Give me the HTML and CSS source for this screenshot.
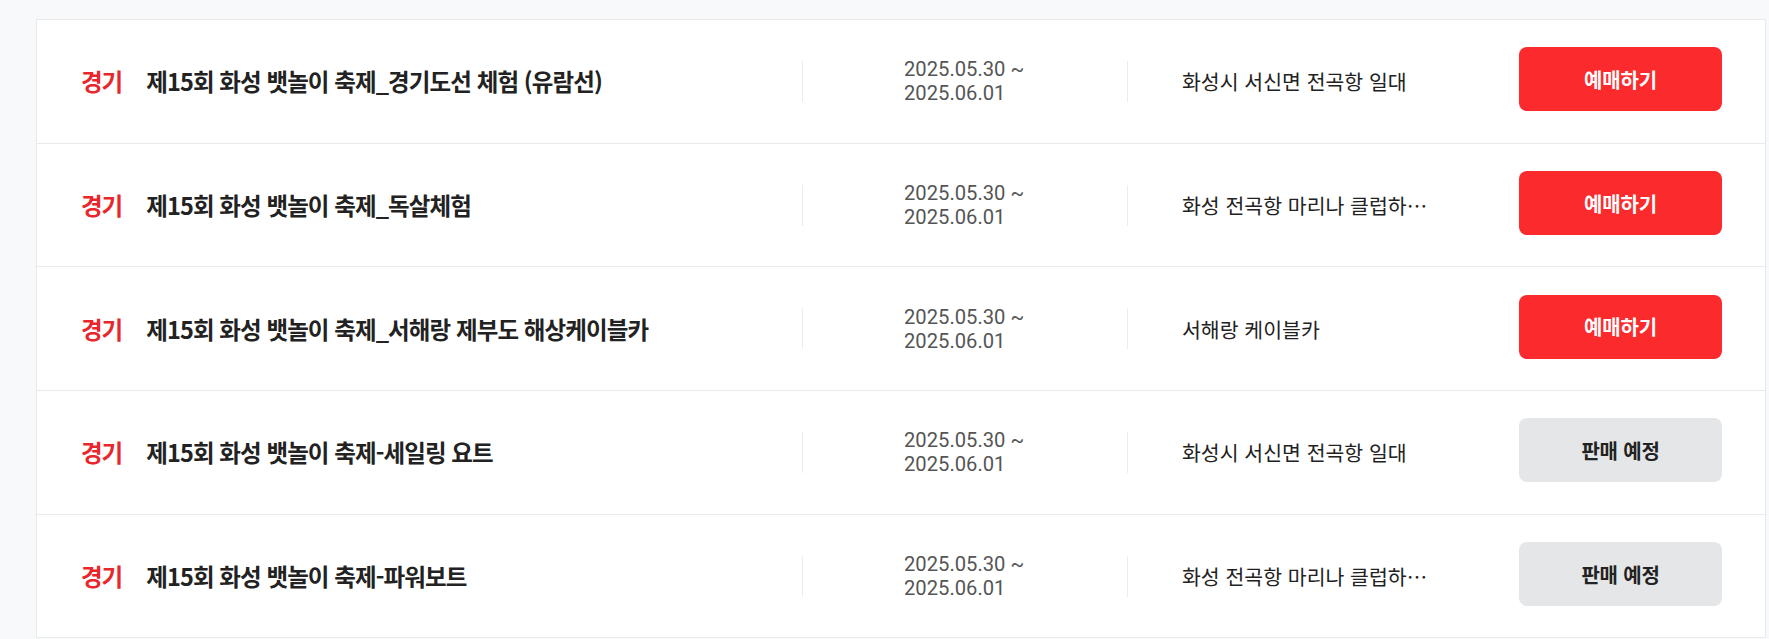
FILE: index.html
```html
<!DOCTYPE html>
<html lang="ko">
<head>
<meta charset="utf-8">
<title>공연 목록</title>
<link rel="stylesheet" href="styles.css">
</head>
<body>
<div class="list">
  <div class="row">
    <div class="col-title"><span class="region">경기</span><span class="title">제15회 화성 뱃놀이 축제_경기도선 체험 (유람선)</span></div>
    <div class="col-date"><span class="date">2025.05.30 ~ 2025.06.01</span></div>
    <div class="col-loc"><span class="loc">화성시 서신면 전곡항 일대</span></div>
    <div class="col-btn"><button class="btn btn-buy">예매하기</button></div>
  </div>
  <div class="row">
    <div class="col-title"><span class="region">경기</span><span class="title">제15회 화성 뱃놀이 축제_독살체험</span></div>
    <div class="col-date"><span class="date">2025.05.30 ~ 2025.06.01</span></div>
    <div class="col-loc"><span class="loc">화성 전곡항 마리나 클럽하우스</span></div>
    <div class="col-btn"><button class="btn btn-buy">예매하기</button></div>
  </div>
  <div class="row">
    <div class="col-title"><span class="region">경기</span><span class="title">제15회 화성 뱃놀이 축제_서해랑 제부도 해상케이블카</span></div>
    <div class="col-date"><span class="date">2025.05.30 ~ 2025.06.01</span></div>
    <div class="col-loc"><span class="loc">서해랑 케이블카</span></div>
    <div class="col-btn"><button class="btn btn-buy">예매하기</button></div>
  </div>
  <div class="row">
    <div class="col-title"><span class="region">경기</span><span class="title">제15회 화성 뱃놀이 축제-세일링 요트</span></div>
    <div class="col-date"><span class="date">2025.05.30 ~ 2025.06.01</span></div>
    <div class="col-loc"><span class="loc">화성시 서신면 전곡항 일대</span></div>
    <div class="col-btn"><button class="btn btn-soon">판매 예정</button></div>
  </div>
  <div class="row">
    <div class="col-title"><span class="region">경기</span><span class="title">제15회 화성 뱃놀이 축제-파워보트</span></div>
    <div class="col-date"><span class="date">2025.05.30 ~ 2025.06.01</span></div>
    <div class="col-loc"><span class="loc">화성 전곡항 마리나 클럽하우스</span></div>
    <div class="col-btn"><button class="btn btn-soon">판매 예정</button></div>
  </div>
</div>
</body>
</html>
```

FILE: styles.css
```css
html, body {
  margin: 0;
  padding: 0;
  background: #f8f9fa;
}

body {
  font-family: "Noto Sans CJK KR", "Noto Sans", sans-serif;
  color: #222;
  overflow: hidden;
}

.list {
  margin: 19px 3px 0 36px;
  background: #fff;
  border: 1px solid #e9eaec;
  border-bottom: none;
}

.row {
  display: flex;
  align-items: center;
  height: 122.7px;
  border-bottom: 1px solid #e9eaec;
}

.col-title {
  flex: 1;
  min-width: 0;
  display: flex;
  align-items: center;
  padding-left: 44px;
  white-space: nowrap;
}

.region {
  color: #e8262c;
  font-weight: 700;
  font-size: 23.5px;
  letter-spacing: -1px;
  margin-right: 24px;
}

.title {
  font-weight: 700;
  font-size: 23.5px;
  letter-spacing: -0.9px;
  color: #222;
}

.col-date {
  width: 324px;
  height: 41px;
  border-left: 1px solid #ececee;
  display: flex;
  align-items: center;
  justify-content: center;
}

.date {
  display: inline-block;
  width: 122px;
  font-family: Roboto, "Noto Sans", sans-serif;
  font-size: 20.2px;
  line-height: 24px;
  color: #555;
  text-align: left;
}

.col-loc {
  width: 253px;
  height: 41px;
  border-left: 1px solid #ececee;
  padding-left: 54px;
  display: flex;
  align-items: center;
  min-width: 0;
}

.loc {
  display: block;
  width: 100%;
  font-size: 20.5px;
  color: #222;
  white-space: nowrap;
  overflow: hidden;
  text-overflow: ellipsis;
}

.col-btn {
  padding-left: 84px;
  padding-right: 43px;
  display: flex;
  align-items: center;
}

.btn {
  width: 203px;
  height: 64px;
  border: none;
  border-radius: 8px;
  font-family: "Noto Sans CJK KR", "Noto Sans", sans-serif;
  font-weight: 700;
  font-size: 20px;
  letter-spacing: -0.2px;
  cursor: pointer;
  margin-top: -4px;
}

.btn-buy {
  background: #fa2a2d;
  color: #fff;
}

.btn-soon {
  background: #e5e6e8;
  color: #222;
}
```
